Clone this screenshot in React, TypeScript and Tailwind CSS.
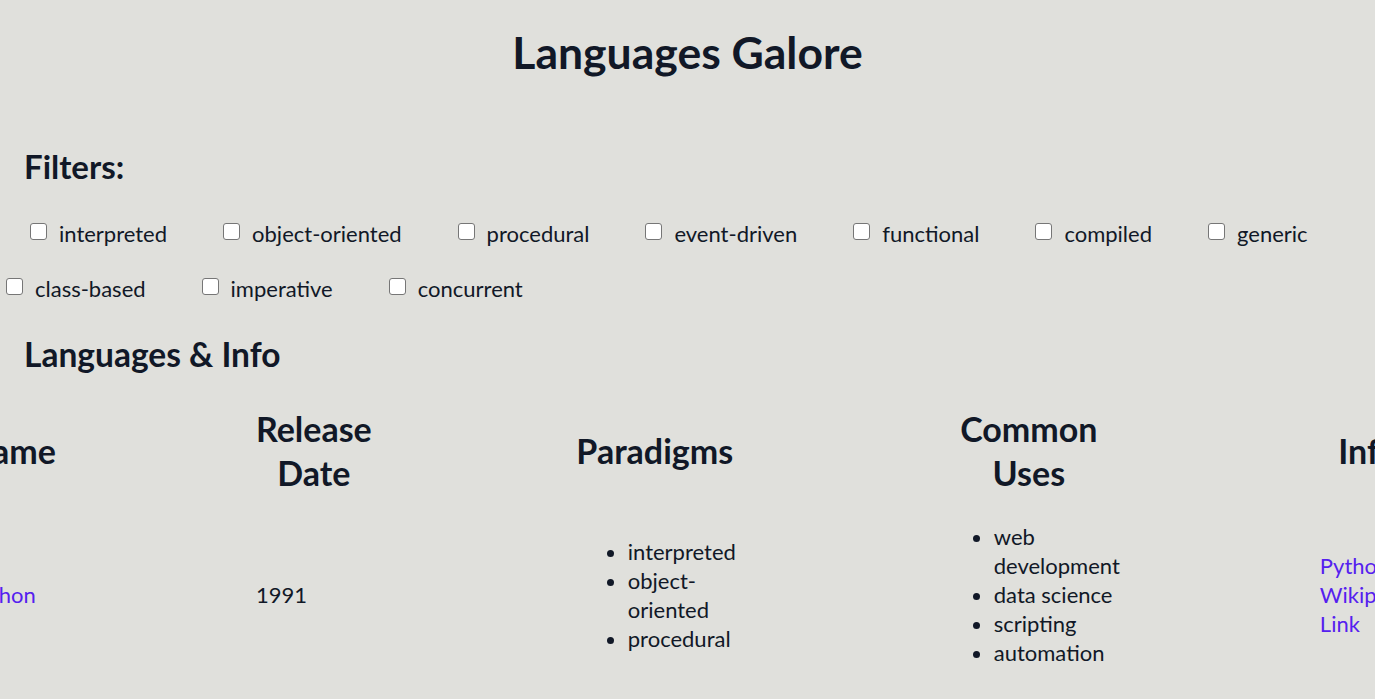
import React from "react";

const filters = [
  "interpreted",
  "object-oriented",
  "procedural",
  "event-driven",
  "functional",
  "compiled",
  "generic",
  "class-based",
  "imperative",
  "concurrent",
];

export default function App() {
  return (
    <div className="min-h-screen overflow-hidden bg-[#e0e0dc] text-[#111827] font-['Lato','Noto_Sans',sans-serif] text-[22px] leading-[29px]">
      <h1 className="mt-[25px] text-center text-[44.5px] leading-[54px] font-bold">Languages Galore</h1>

      <h2 className="mt-[67px] pl-[24px] text-[33px] leading-[40px] font-bold">Filters:</h2>

      <div className="mt-[20px] flex flex-wrap">
        {filters.map((f, i) => (
          <label
            key={f}
            className={`flex h-[55px] items-center mr-[50px] ${i === 0 ? "ml-[24px]" : ""}`}
          >
            <input
              type="checkbox"
              className="ml-[6px] mr-[12px] mb-[4px] h-[17px] w-[17px] appearance-none rounded-[3px] border-[1.5px] border-[#767676] bg-white"
            />
            <span>{f}</span>
          </label>
        ))}
      </div>

      <h2 className="mt-[18px] pl-[24px] text-[33.5px] leading-[40px] font-bold">Languages &amp; Info</h2>

      <div className="flex justify-center pl-[8px]">
        <table className="mt-[21px] shrink-0">
          <thead>
            <tr className="text-[34px] leading-[44px] font-bold">
              <th className="w-[276px] px-[100px] py-[12px] text-center">Name</th>
              <th className="w-[313px] px-[100px] py-[12px] text-center">Release Date</th>
              <th className="w-[366px] px-[100px] py-[12px] text-center">Paradigms</th>
              <th className="w-[382px] px-[100px] py-[12px] text-center">Common Uses</th>
              <th className="w-[292px] px-[100px] py-[12px] text-center">Info</th>
            </tr>
          </thead>
          <tbody>
            <tr>
              <td className="px-[100px] align-middle">
                <a href="#" className="text-[#5520ef]">Python</a>
              </td>
              <td className="px-[100px] align-middle">1991</td>
              <td className="px-[100px] align-middle">
                <ul className="my-[15px] list-disc pl-[56px]">
                  <li>interpreted</li>
                  <li>object-oriented</li>
                  <li>procedural</li>
                </ul>
              </td>
              <td className="px-[100px] align-middle">
                <ul className="my-[15px] list-disc pl-[56px]">
                  <li>web development</li>
                  <li>data science</li>
                  <li>scripting</li>
                  <li>automation</li>
                </ul>
              </td>
              <td className="px-[100px] align-middle">
                <a href="#" className="text-[#5520ef]">Python Wikipedia Link</a>
              </td>
            </tr>
          </tbody>
        </table>
      </div>
    </div>
  );
}
